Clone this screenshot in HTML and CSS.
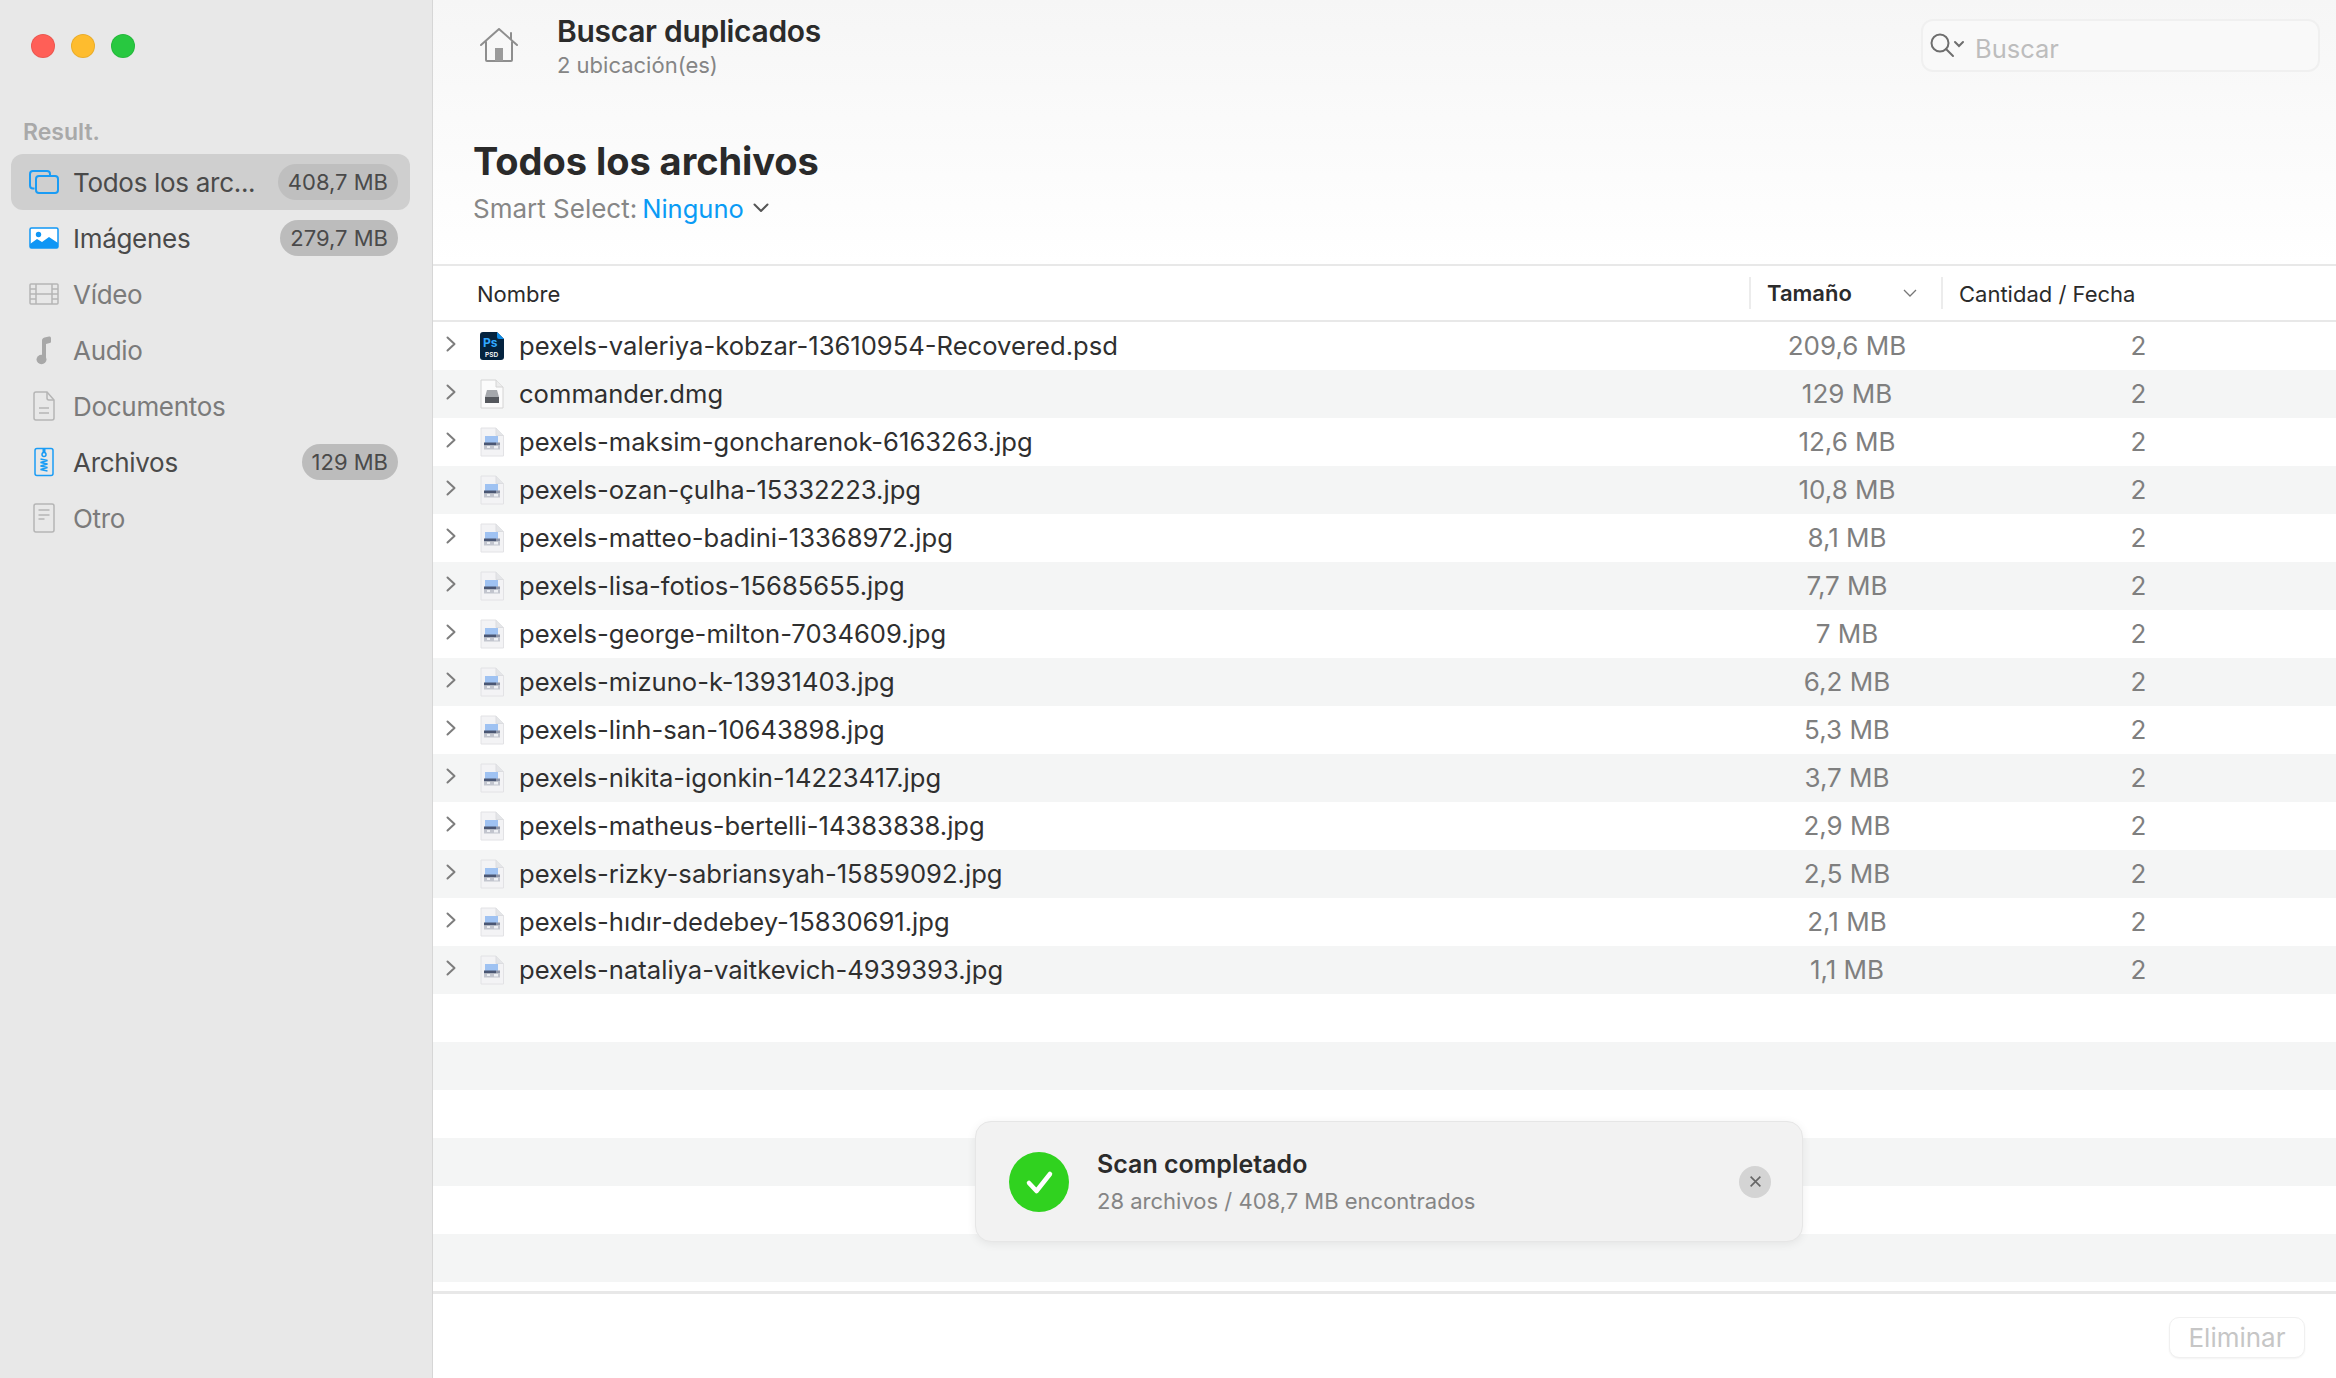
FILE: index.html
```html
<!DOCTYPE html>
<html lang="es">
<head>
<meta charset="utf-8">
<title>Buscar duplicados</title>
<link rel="stylesheet" href="styles.css">
</head>
<body>
<svg class="defs" width="0" height="0" aria-hidden="true">
  <symbol id="i-jpg" viewBox="0 0 26 30">
    <path d="M2 1h15l7.500 7.500V29H2z" fill="#f3f3f5" stroke="#e2e2e5" stroke-width="1"/>
    <path d="M17 1v7.500h7.500" fill="#e4e5e8" stroke="#dcdde0" stroke-width="1"/>
    <rect x="6" y="9" width="13" height="7" fill="#9fc2f2"/>
    <rect x="5" y="15.500" width="12" height="3" fill="#4a5673"/>
    <rect x="17" y="15.500" width="4" height="3" fill="#8f96a8"/>
    <rect x="5" y="18.500" width="16" height="4" fill="#c2c5ce"/>
    <rect x="8" y="19" width="3" height="2" fill="#eef0f4"/>
    <rect x="15" y="19" width="4" height="2.500" fill="#eef0f4"/>
  </symbol>
</svg>
<div class="app">
  <aside class="sidebar">
    <div class="lights">
      <span class="light red"></span><span class="light yellow"></span><span class="light green"></span>
    </div>
    <div class="side-label">Result.</div>
    <nav class="side-list">
      <div class="side-item active">
        <svg class="side-icon" viewBox="0 0 30 24" fill="none" stroke="#1a9cf5" stroke-width="2"><path d="M5.500 18.500H4a3 3 0 0 1-3-3V4a3 3 0 0 1 3-3h14a3 3 0 0 1 3 3v1.500"/><rect x="7" y="6" width="22" height="17" rx="3"/></svg>
        <span class="side-name dark">Todos los arc...</span><span class="badge light-badge">408,7 MB</span>
      </div>
      <div class="side-item">
        <svg class="side-icon" viewBox="0 0 30 22"><rect x="1" y="1" width="28" height="20" rx="1.500" fill="#fff" stroke="#0f96f5" stroke-width="1.500"/><circle cx="9.500" cy="7.500" r="2.700" fill="#0f96f5"/><path d="M1 21v-4l7-5 5 3 7-5 9 6v5z" fill="#0f96f5"/></svg>
        <span class="side-name dark">Imágenes</span><span class="badge">279,7 MB</span>
      </div>
      <div class="side-item">
        <svg class="side-icon" viewBox="0 0 30 22" fill="none" stroke="#b5b5b5" stroke-width="1.500"><rect x="1" y="1" width="28" height="20" rx="1"/><path d="M7 1v20M23 1v20M7 11h16M1 6h6M1 11h6M1 16h6M23 6h6M23 11h6M23 16h6"/></svg>
        <span class="side-name">Vídeo</span>
      </div>
      <div class="side-item">
        <svg class="side-icon" viewBox="0 0 30 30"><path d="M13 25V5.500c0-1.500.8-2.500 2.500-3l4.500-1c1-.2 2 .4 2 1.500v3.500c0 .9-.5 1.400-1.300 1.600L17 9v16h-4z" fill="#a8a8a8"/><ellipse cx="12.500" cy="24.500" rx="5" ry="4.700" fill="#a8a8a8"/></svg>
        <span class="side-name">Audio</span>
      </div>
      <div class="side-item">
        <svg class="side-icon" viewBox="0 0 30 30" fill="none" stroke="#b5b5b5" stroke-width="1.500"><path d="M5 3a2 2 0 0 1 2-2h11l7 8v18a2 2 0 0 1-2 2H7a2 2 0 0 1-2-2z"/><path d="M18 1v6a2 2 0 0 0 2 2h5M10 17h10M10 22h10"/></svg>
        <span class="side-name">Documentos</span>
      </div>
      <div class="side-item">
        <svg class="side-icon" viewBox="0 0 30 30" fill="none" stroke="#1a9cf5" stroke-width="1.500"><rect x="6" y="1.500" width="18" height="27" rx="2"/><path d="M15 1v5" stroke-width="3"/><circle cx="15" cy="7.500" r="2"/><path d="M11.500 12l7 1.500-7 2 7 1.500-7 2 7 1.500-7 2 7 1.500"/></svg>
        <span class="side-name dark">Archivos</span><span class="badge">129 MB</span>
      </div>
      <div class="side-item">
        <svg class="side-icon" viewBox="0 0 30 30" fill="none" stroke="#b5b5b5" stroke-width="1.500"><rect x="5" y="1" width="20" height="28" rx="2"/><path d="M9.500 7h11M9.500 12h11M9.500 16h6"/></svg>
        <span class="side-name">Otro</span>
      </div>
    </nav>
  </aside>
  <main class="main">
    <header class="head">
      <div class="topbar">
        <svg class="home" viewBox="0 0 38 36" fill="none" stroke="#8e8e8e" stroke-width="2" stroke-linejoin="round" stroke-linecap="round"><path d="M1 17 19 1l18 16"/><path d="M31 11V5"/><path d="M6 14v18a1 1 0 0 0 1 1h24a1 1 0 0 0 1-1V14"/><rect x="15" y="20" width="8" height="13" fill="#9a9a9a" stroke="none"/></svg>
        <div class="top-titles">
          <div class="top-title">Buscar duplicados</div>
          <div class="top-sub">2 ubicación(es)</div>
        </div>
        <div class="search">
          <svg class="search-icon" viewBox="0 0 38 26" fill="none" stroke="#6e6e6e" stroke-width="2" stroke-linecap="round"><circle cx="11" cy="10" r="8.500"/><path d="m17 16 7 7"/><path d="m26 9 4 4 4-4"/></svg>
          <span class="search-text">Buscar</span>
        </div>
      </div>
      <h1 class="page-title">Todos los archivos</h1>
      <div class="smart"><span class="smart-label">Smart Select:</span><span class="smart-value">Ninguno</span>
        <svg class="smart-chev" viewBox="0 0 16 10" fill="none" stroke="#555" stroke-width="2" stroke-linecap="round" stroke-linejoin="round"><path d="m1.500 1.500 6.500 6.500 6.500-6.500"/></svg>
      </div>
    </header>
    <div class="thead">
      <div class="th th-name">Nombre</div>
      <div class="th th-size"><span>Tamaño</span><svg class="sort" viewBox="0 0 14 8" fill="none" stroke="#777" stroke-width="1.300"><path d="m1 1 6 6 6-6"/></svg></div>
      <div class="th th-count">Cantidad / Fecha</div>
    </div>
    <div class="tbody">
      <div class="row"><svg class="chev" viewBox="0 0 10 16"><path d="m1.500 1.500 7 6.500-7 6.500" /></svg>
        <svg class="ficon" viewBox="0 0 26 30"><path d="M4 1h14l7 7v18a3 3 0 0 1-3 3H4a3 3 0 0 1-3-3V4a3 3 0 0 1 3-3z" fill="#04233f"/><path d="M18 1l7 7h-5a2 2 0 0 1-2-2z" fill="#0c8ce9"/><text x="4" y="16" class="ps">Ps</text><text x="6" y="25.500" class="psd">PSD</text></svg>
        <span class="name">pexels-valeriya-kobzar-13610954-Recovered.psd</span><span class="size">209,6 MB</span><span class="count">2</span></div>
      <div class="row"><svg class="chev" viewBox="0 0 10 16"><path d="m1.500 1.500 7 6.500-7 6.500" /></svg>
        <svg class="ficon" viewBox="0 0 26 30"><path d="M2 1h15l7 7v21H2z" fill="#fbfbfb" stroke="#d4d4d4"/><path d="M17 1v7h7" fill="#ececec" stroke="#d4d4d4"/><path d="M6 18l2-7h10l2 7v6H6z" fill="#a5a8ac"/><rect x="6" y="18" width="14" height="6" fill="#55585d"/></svg>
        <span class="name">commander.dmg</span><span class="size">129 MB</span><span class="count">2</span></div>
      <div class="row"><svg class="chev" viewBox="0 0 10 16"><path d="m1.500 1.500 7 6.500-7 6.500" /></svg><svg class="ficon"><use href="#i-jpg"/></svg><span class="name">pexels-maksim-goncharenok-6163263.jpg</span><span class="size">12,6 MB</span><span class="count">2</span></div>
      <div class="row"><svg class="chev" viewBox="0 0 10 16"><path d="m1.500 1.500 7 6.500-7 6.500" /></svg><svg class="ficon"><use href="#i-jpg"/></svg><span class="name">pexels-ozan-çulha-15332223.jpg</span><span class="size">10,8 MB</span><span class="count">2</span></div>
      <div class="row"><svg class="chev" viewBox="0 0 10 16"><path d="m1.500 1.500 7 6.500-7 6.500" /></svg><svg class="ficon"><use href="#i-jpg"/></svg><span class="name">pexels-matteo-badini-13368972.jpg</span><span class="size">8,1 MB</span><span class="count">2</span></div>
      <div class="row"><svg class="chev" viewBox="0 0 10 16"><path d="m1.500 1.500 7 6.500-7 6.500" /></svg><svg class="ficon"><use href="#i-jpg"/></svg><span class="name">pexels-lisa-fotios-15685655.jpg</span><span class="size">7,7 MB</span><span class="count">2</span></div>
      <div class="row"><svg class="chev" viewBox="0 0 10 16"><path d="m1.500 1.500 7 6.500-7 6.500" /></svg><svg class="ficon"><use href="#i-jpg"/></svg><span class="name">pexels-george-milton-7034609.jpg</span><span class="size">7 MB</span><span class="count">2</span></div>
      <div class="row"><svg class="chev" viewBox="0 0 10 16"><path d="m1.500 1.500 7 6.500-7 6.500" /></svg><svg class="ficon"><use href="#i-jpg"/></svg><span class="name">pexels-mizuno-k-13931403.jpg</span><span class="size">6,2 MB</span><span class="count">2</span></div>
      <div class="row"><svg class="chev" viewBox="0 0 10 16"><path d="m1.500 1.500 7 6.500-7 6.500" /></svg><svg class="ficon"><use href="#i-jpg"/></svg><span class="name">pexels-linh-san-10643898.jpg</span><span class="size">5,3 MB</span><span class="count">2</span></div>
      <div class="row"><svg class="chev" viewBox="0 0 10 16"><path d="m1.500 1.500 7 6.500-7 6.500" /></svg><svg class="ficon"><use href="#i-jpg"/></svg><span class="name">pexels-nikita-igonkin-14223417.jpg</span><span class="size">3,7 MB</span><span class="count">2</span></div>
      <div class="row"><svg class="chev" viewBox="0 0 10 16"><path d="m1.500 1.500 7 6.500-7 6.500" /></svg><svg class="ficon"><use href="#i-jpg"/></svg><span class="name">pexels-matheus-bertelli-14383838.jpg</span><span class="size">2,9 MB</span><span class="count">2</span></div>
      <div class="row"><svg class="chev" viewBox="0 0 10 16"><path d="m1.500 1.500 7 6.500-7 6.500" /></svg><svg class="ficon"><use href="#i-jpg"/></svg><span class="name">pexels-rizky-sabriansyah-15859092.jpg</span><span class="size">2,5 MB</span><span class="count">2</span></div>
      <div class="row"><svg class="chev" viewBox="0 0 10 16"><path d="m1.500 1.500 7 6.500-7 6.500" /></svg><svg class="ficon"><use href="#i-jpg"/></svg><span class="name">pexels-hıdır-dedebey-15830691.jpg</span><span class="size">2,1 MB</span><span class="count">2</span></div>
      <div class="row"><svg class="chev" viewBox="0 0 10 16"><path d="m1.500 1.500 7 6.500-7 6.500" /></svg><svg class="ficon"><use href="#i-jpg"/></svg><span class="name">pexels-nataliya-vaitkevich-4939393.jpg</span><span class="size">1,1 MB</span><span class="count">2</span></div>
      <div class="row"></div><div class="row"></div><div class="row"></div><div class="row"></div><div class="row"></div><div class="row"></div>
    </div>
    <footer class="foot"><button class="delete" type="button">Eliminar</button></footer>
    <div class="toast">
      <svg class="toast-check" viewBox="0 0 60 60"><circle cx="30" cy="30" r="30" fill="#30d21f"/><path d="m20 31 7.500 8L41 22" fill="none" stroke="#fff" stroke-width="4.500" stroke-linecap="round" stroke-linejoin="round"/></svg>
      <div class="toast-text">
        <div class="toast-title">Scan completado</div>
        <div class="toast-sub">28 archivos / 408,7 MB encontrados</div>
      </div>
      <span class="toast-close"><svg viewBox="0 0 12 12" fill="none" stroke="#666" stroke-width="1.500"><path d="m1.500 1.500 9 9M10.500 1.500l-9 9"/></svg></span>
    </div>
  </main>
</div>
</body>
</html>
```

FILE: styles.css
```css
* { box-sizing: border-box; }
html, body { margin: 0; height: 100%; }
body { font-family: Inter, "Noto Sans", sans-serif; color: #2b2b2b; background: #fff; overflow: hidden; }
.defs { position: absolute; }
.app { display: flex; width: 2336px; height: 1378px; }

.sidebar { width: 433px; flex: none; background: #e8e8e8; border-right: 1px solid #d6d6d6; padding: 34px 22px 0 11px; }
.lights { display: flex; gap: 16px; padding-left: 20px; height: 24px; }
.light { width: 24px; height: 24px; border-radius: 50%; border: 1px solid rgba(0,0,0,.08); }
.red { background: #ff5f57; }
.yellow { background: #febc2e; }
.green { background: #28c840; }
.side-label { margin: 61px 0 0 12px; font-size: 23px; line-height: 26px; font-weight: 600; color: #a9a9a9; }
.side-list { margin-top: 9px; display: flex; flex-direction: column; }
.side-item { display: flex; align-items: center; height: 56px; padding: 0 12px 0 18px; border-radius: 12px; }
.side-item.active { background: #cfcfcf; }
.side-icon { width: 30px; height: 30px; flex: none; }
.side-name { margin-left: 14px; font-size: 26px; color: #7b7b7b; letter-spacing: -.3px; flex: 1; white-space: nowrap; }
.side-name.dark { color: #4a4a4a; }
.badge { height: 36px; line-height: 36px; padding: 0 10px; border-radius: 18px; background: #bcbcbc; color: #4a4a4a; font-size: 22px; white-space: nowrap; }
.badge.light-badge { background: #bfbfbf; }

.main { position: relative; flex: 1; display: flex; flex-direction: column; min-width: 0; }
.head { height: 264px; flex: none; background: linear-gradient(#f6f6f6, #ffffff); padding: 0 16px 0 40px; }
.topbar { display: flex; align-items: flex-start; height: 106px; }
.home { width: 38px; height: 36px; margin: 28px 0 0 7px; flex: none; }
.top-titles { margin-left: 39px; padding-top: 12px; flex: 1; }
.top-title { font-size: 30px; line-height: 38px; font-weight: 600; color: #2b2b2b; letter-spacing: -.3px; }
.top-sub { font-size: 22px; line-height: 30px; color: #858585; }
.search { width: 399px; height: 53px; margin-top: 19px; display: flex; align-items: center; padding-left: 6px; border: 2px solid #f0f0f0; border-radius: 12px; background: #f9f9f9; }
.search-icon { width: 38px; height: 26px; flex: none; }
.search-text { margin: 5px 0 0 8px; font-size: 25.500px; color: #bdbdbd; }
.page-title { margin: 31px 0 0; font-size: 38px; line-height: 48px; font-weight: 700; color: #2a2a2a; letter-spacing: -.05px; }
.smart { margin-top: 6px; display: flex; align-items: center; font-size: 26px; line-height: 36px; white-space: pre; }
.smart-label { color: #878787; }
.smart-value { margin-left: 5px; font-size: 25.500px; color: #0a9bf5; }
.smart-chev { width: 16px; height: 10px; margin: -2px 0 0 9px; }

.thead { height: 58px; flex: none; display: grid; grid-template-columns: 1316px 192px 1fr; align-items: center; border-top: 2px solid #e8e8e8; border-bottom: 2px solid #e8e8e8; font-size: 22px; }
.th { height: 32px; line-height: 34px; }
.th-name { padding-left: 44px; color: #2b2b2b; }
.th-size { display: flex; align-items: center; justify-content: space-between; padding: 0 24px 0 16px; font-weight: 600; border-left: 2px solid #ececec; }
.sort { width: 14px; height: 8px; }
.th-count { padding-left: 16px; border-left: 2px solid #ececec; }

.tbody { flex: 1; min-height: 0; overflow: hidden; }
.row { height: 48px; display: grid; grid-template-columns: 15px 46px 1fr 192px 395px; align-items: center; padding-left: 13px; font-size: 26px; }
.row:nth-child(even) { background: #f4f5f5; }
.chev { width: 10px; height: 16px; margin-top: -4px; fill: none; stroke: #7d7d7d; stroke-width: 2; stroke-linecap: round; stroke-linejoin: round; }
.ficon { width: 26px; height: 30px; margin-left: 18px; }
.ps { font: 700 12px Inter, sans-serif; fill: #31a8ff; }
.psd { font: 600 6.500px Inter, sans-serif; fill: #fff; }
.name { margin: -2px 0 0 12px; font-size: 25.600px; color: #2f2f2f; white-space: nowrap; }
.size { margin-top: -2px; padding-left: 4px; text-align: center; color: #7f7f7f; }
.count { margin-top: -2px; text-align: center; color: #7f7f7f; }

.foot { height: 87px; flex: none; border-top: 3px solid #e8e8e8; display: flex; justify-content: flex-end; align-items: flex-start; padding: 23px 31px 0 0; }
.delete { width: 136px; height: 41px; font: 26px Inter, sans-serif; color: #c6c6c6; background: #fff; border: 1px solid #f0f0f0; border-radius: 10px; box-shadow: 0 1px 2px rgba(0,0,0,.05); padding: 0; }

.toast { position: absolute; left: 542px; top: 1121px; width: 828px; height: 121px; display: flex; align-items: center; padding: 0 34px 0 33px; background: #f2f2f2; border: 1px solid #e6e6e6; border-radius: 16px; box-shadow: 0 2px 10px rgba(0,0,0,.07); }
.toast-check { width: 60px; height: 60px; flex: none; }
.toast-text { margin-left: 28px; flex: 1; }
.toast-title { font-size: 25px; line-height: 30px; font-weight: 600; color: #2b2b2b; }
.toast-sub { margin-top: 8px; font-size: 22px; line-height: 28px; color: #858585; }
.toast-close { width: 32px; height: 32px; border-radius: 50%; background: #d4d4d4; display: flex; align-items: center; justify-content: center; margin-right: -3px; }
.toast-close svg { width: 13px; height: 13px; }
```
